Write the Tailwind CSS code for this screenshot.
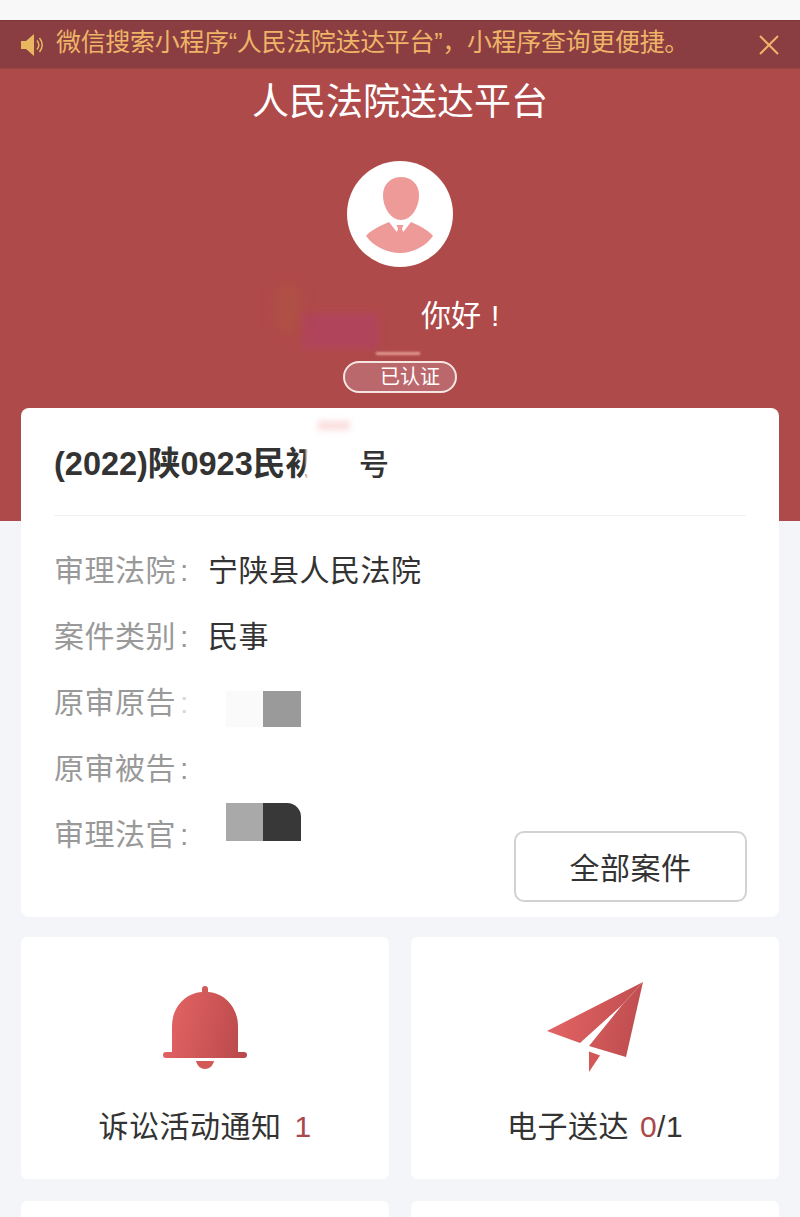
<!DOCTYPE html>
<html lang="zh-CN">
<head>
<meta charset="utf-8">
<script src="https://cdn.jsdelivr.net/npm/@tailwindcss/browser@4"></script>
</head>
<body class="m-0">
<div class="relative w-[800px] h-[1217px] overflow-hidden bg-[#f4f5f9] font-['Liberation_Sans','Noto_Sans_CJK_SC',sans-serif]">
  <div class="h-5 bg-[#f8f8f8]"></div>
  <div class="h-[49px] flex items-center pl-[21px] pr-[21px] bg-[#8a3e41] border-t border-[#7d3538] border-b border-b-[#9a4446]">
    <svg class="w-[22px] h-[22px] shrink-0" viewBox="0 0 22 22"><path d="M0 7h5l8-7v22l-8-7H0z" fill="#e8b75f"/><path d="M16 6.500c2.500 3 2.500 6 0 9M18.500 4c3.500 4.500 3.500 9.500 0 14" fill="none" stroke="#e8b75f" stroke-width="1.500"/></svg>
    <span class="ml-[13px] mb-[4px] text-[25px] leading-none tracking-[-0.32px] text-[#efb468] whitespace-nowrap">微信搜索小程序“人民法院送达平台”&#xFF0C;小程序查询更便捷。</span>
    <svg class="ml-auto w-5 h-5 shrink-0" viewBox="0 0 20 20"><path d="M1 1l18 18M19 1L1 19" stroke="#efb468" stroke-width="2" fill="none"/></svg>
  </div>
  <header class="h-[452px] bg-[#af4a4a] flex flex-col items-center">
    <h1 class="mt-[11px] text-[37px] leading-[46px] text-white font-normal">人民法院送达平台</h1>
    <div class="mt-[35px] w-[106px] h-[106px] rounded-full bg-white">
      <svg viewBox="347 161 106 106" class="w-full h-full">
        <path d="M401 177c10 0 18 7 18 18 0 13-8 25-18 25s-18-12-18-25c0-11 8-18 18-18z" fill="#ee9a98"/>
        <path d="M366 236c5-6 14-10 23-14l11 14 11-14c9 4 17 8 22 14-7 10-20 17-33 17s-27-7-34-17z" fill="#ee9a98"/>
        <path d="M396.500 225h7l-1.500 3.500 2 6.500-4 4-4-4 2-6.500z" fill="#ee9a98"/>
      </svg>
    </div>
    <div class="relative mt-[26px] w-[200px] h-[46px] text-[30px] leading-[46px] text-white whitespace-nowrap">
      <div class="absolute left-[2px] top-[20px] w-[76px] h-[36px] bg-[#b0445a] blur-[3px]"></div>
      <div class="absolute left-[-22px] top-[-8px] w-[20px] h-[46px] bg-[#b25a3e]/50 blur-[7px]"></div>
      <div class="absolute left-[76px] top-[59px] w-[44px] h-[3px] bg-[#e39a8f] blur-[1px]"></div>
      <span class="absolute left-[121px] top-0">你好<span class="ml-[10px]">&#33;</span></span>
    </div>
    <div class="mt-[22px] w-[114px] h-[32px] rounded-full border-2 border-[#f6e6e2] bg-[#bb686d] text-[20px] leading-[28px] text-white pl-[35px]">已认证</div>
  </header>
  <main class="relative -mt-[113px] px-[21px]">
    <section class="relative h-[509px] rounded-[8px] bg-white px-[33px]">
      <div class="absolute left-[297px] top-[13px] w-[32px] h-[9px] bg-[#fbdcdc] blur-[3px]"></div>
      <div class="relative h-[108px] border-b border-[#f0f0f2] flex items-center text-[#333] pt-[6px]">
        <span class="text-[32.5px] font-bold whitespace-nowrap">(2022)陕0923民初</span>
        <span class="absolute left-[252px] top-[36px] w-[32px] h-[42px] bg-white blur-[1px]"></span>
        <span class="absolute left-[305px] top-[37px] text-[30px] leading-[40px] font-medium">号</span>
      </div>
      <dl class="pt-[22px] text-[30px] leading-[66px] tracking-[0.5px]">
        <div class="flex h-[66px]"><dt class="w-[154px] text-[#999]">审理法院<span class="ml-[4px]">:</span></dt><dd class="text-[#333]">宁陕县人民法院</dd></div>
        <div class="flex h-[66px]"><dt class="w-[154px] text-[#999]">案件类别<span class="ml-[4px]">:</span></dt><dd class="text-[#333]">民事</dd></div>
        <div class="flex h-[66px]"><dt class="w-[154px] text-[#999]">原审原告<span class="ml-[4px] text-[#d8d8d8]">:</span></dt></div>
        <div class="flex h-[66px]"><dt class="w-[154px] text-[#999]">原审被告<span class="ml-[4px]">:</span></dt></div>
        <div class="flex h-[66px]"><dt class="w-[154px] text-[#999]">审理法官<span class="ml-[4px]">:</span></dt></div>
      </dl>
      <div class="absolute left-[205px] top-[283px] flex h-[36px]">
        <div class="w-[37px] bg-[#fafafa]"></div>
        <div class="w-[38px] bg-[#9a9a9a]"></div>
      </div>
      <div class="absolute left-[205px] top-[395px] flex h-[38px]">
        <div class="w-[37px] bg-[#a9a9a9]"></div>
        <div class="w-[38px] bg-[#383838] rounded-tr-[14px]"></div>
      </div>
      <button class="absolute left-[493px] top-[423px] w-[233px] h-[71px] rounded-[10px] border-2 border-[#d2d2d2] bg-white pt-[3px] text-[30px] tracking-[0.5px] text-[#333]">全部案件</button>
    </section>
    <div class="mt-[20px] grid grid-cols-2 gap-[22px]">
      <a class="h-[242px] rounded-[6px] bg-white flex flex-col items-center">
        <svg class="mt-[48px] w-[84px] h-[85px]" viewBox="163 985 84 85">
          <defs><linearGradient id="g1" gradientUnits="userSpaceOnUse" x1="163" y1="1020" x2="247" y2="1040"><stop offset="0" stop-color="#e56464"/><stop offset="1" stop-color="#b9494b"/></linearGradient></defs>
          <path d="M172 1052v-26c0-18 13-33 30-34v-3a3 3 0 0 1 6 0v3c17 1 30 16 30 34v26z" fill="url(#g1)"/>
          <rect x="163" y="1052" width="84" height="6" rx="3" fill="url(#g1)"/>
          <path d="M196 1061h18c-1 5-5 8-9 8s-8-3-9-8z" fill="#d35858"/>
        </svg>
        <p class="mt-[34px] text-[30px] leading-[46px] tracking-[0.5px] text-[#333] whitespace-nowrap">诉讼活动通知<span class="ml-[13px] text-[#a9494c]">1</span></p>
      </a>
      <a class="h-[242px] rounded-[6px] bg-white flex flex-col items-center">
        <svg class="mt-[44px] w-[98px] h-[92px]" viewBox="546 982 98 92">
          <defs><linearGradient id="g2" gradientUnits="userSpaceOnUse" x1="547" y1="1020" x2="643" y2="1040"><stop offset="0" stop-color="#e56464"/><stop offset="1" stop-color="#bc4c4e"/></linearGradient></defs>
          <path d="M547 1032L643 983 622 1006 580 1044z" fill="url(#g2)"/>
          <path d="M643 983L626 1058 589 1047 623 1005z" fill="url(#g2)"/>
          <path d="M589 1052.500L600 1056.500 589 1073z" fill="#d35858"/>
        </svg>
        <p class="mt-[31px] text-[30px] leading-[46px] tracking-[0.5px] text-[#333] whitespace-nowrap">电子送达<span class="ml-[11px] text-[#a9494c]">0</span>/1</p>
      </a>
      <a class="h-[242px] rounded-[6px] bg-white"></a>
      <a class="h-[242px] rounded-[6px] bg-white"></a>
    </div>
  </main>
</div>
</body>
</html>
